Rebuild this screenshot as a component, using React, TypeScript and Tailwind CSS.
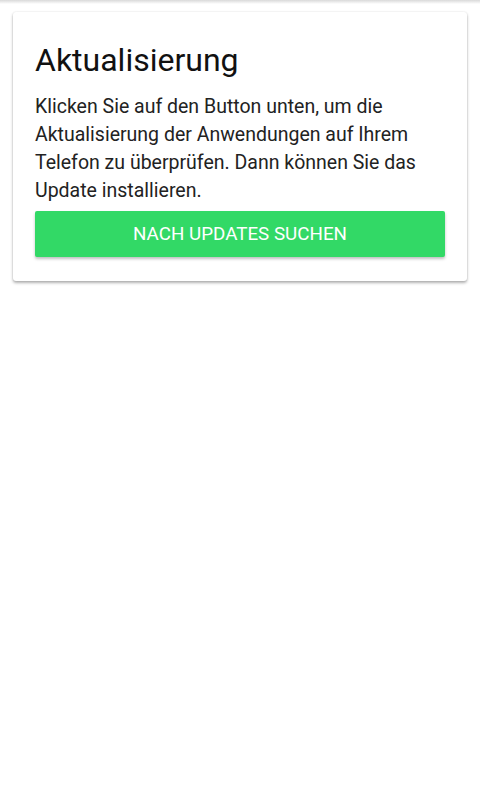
export default function App() {
  return (
    <div className="min-h-[786px] bg-white font-['Roboto',sans-serif]">
      {/* top bar shadow */}
      <div className="h-[4px] bg-gradient-to-b from-[#d9d9d9] to-white" />
      <div className="mx-[13px] mt-[8px] rounded-[3px] bg-white px-[22px] pt-[28px] pb-[24px] shadow-[0_2px_3px_rgba(0,0,0,0.3),0_0_2px_rgba(0,0,0,0.12)]">
        <h1 className="text-[32px] leading-[40px] text-[#111]">Aktualisierung</h1>
        <p className="mt-[13px] text-[19.5px] leading-[28px] text-[#222]">
          Klicken Sie auf den Button unten, um die Aktualisierung der Anwendungen auf Ihrem Telefon zu überprüfen. Dann können Sie das Update installieren.
        </p>
        <button className="mt-[6px] flex h-[46px] w-full items-center justify-center rounded-[2px] bg-[#32d966] text-[18.8px] uppercase text-white shadow-[0_2px_3px_rgba(0,0,0,0.25)]">
          Nach Updates suchen
        </button>
      </div>
    </div>
  );
}
